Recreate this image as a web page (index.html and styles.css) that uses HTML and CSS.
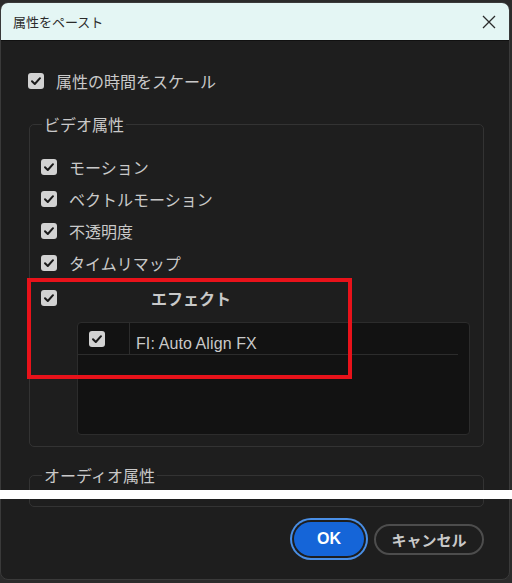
FILE: index.html
```html
<!DOCTYPE html>
<html>
<head>
    <title>属性をペースト</title>
    <link rel="stylesheet" href="styles.css">
</head>
<body>
    <div class="dialog">
        <div class="titlebar">
            <span class="title">属性をペースト</span>
            <svg class="close" width="14" height="14" viewBox="0 0 14 14">
                <path d="M1 1 L13 13 M13 1 L1 13" stroke="#2b2b2b" stroke-width="1.3" fill="none"/>
            </svg>
        </div>
        <div class="content">
            <div class="row scale-row">
                <span class="check"><svg viewBox="0 0 16 16"><path d="M4 8.2 L6.8 11 L12 5.2"/></svg></span>
                <span>属性の時間をスケール</span>
            </div>

            <fieldset class="group">
                <legend>ビデオ属性</legend>
                <div class="row">
                    <span class="check"><svg viewBox="0 0 16 16"><path d="M4 8.2 L6.8 11 L12 5.2"/></svg></span>
                    <span>モーション</span>
                </div>
                <div class="row">
                    <span class="check"><svg viewBox="0 0 16 16"><path d="M4 8.2 L6.8 11 L12 5.2"/></svg></span>
                    <span>ベクトルモーション</span>
                </div>
                <div class="row">
                    <span class="check"><svg viewBox="0 0 16 16"><path d="M4 8.2 L6.8 11 L12 5.2"/></svg></span>
                    <span>不透明度</span>
                </div>
                <div class="row">
                    <span class="check"><svg viewBox="0 0 16 16"><path d="M4 8.2 L6.8 11 L12 5.2"/></svg></span>
                    <span>タイムリマップ</span>
                </div>
                <div class="row effect-row">
                    <span class="check"><svg viewBox="0 0 16 16"><path d="M4 8.2 L6.8 11 L12 5.2"/></svg></span>
                    <span class="effect-label">エフェクト</span>
                </div>
                <div class="fx-list">
                    <div class="fx-item">
                        <div class="fx-check">
                            <span class="check"><svg viewBox="0 0 16 16"><path d="M4 8.2 L6.8 11 L12 5.2"/></svg></span>
                        </div>
                        <div class="fx-name">FI: Auto Align FX</div>
                    </div>
                </div>
            </fieldset>

            <fieldset class="group audio">
                <legend>オーディオ属性</legend>
            </fieldset>

            <div class="buttons">
                <button class="btn btn-ok">OK</button>
                <button class="btn btn-cancel">キャンセル</button>
            </div>
        </div>
    </div>

    <div class="highlight"></div>
    <div class="cut"></div>
</body>
</html>
```

FILE: styles.css
```css
body {
    margin: 0;
    width: 512px;
    height: 583px;
    overflow: hidden;
    position: relative;
    background: #2b2b2b;
    font-family: "Noto Sans CJK JP", "Liberation Sans", sans-serif;
    color: #c9c9c9;
}
.dialog {
    margin: 2px 2px 0 0;
    height: 576px;
    border: 1px solid #3a3a3a;
    border-radius: 8px;
    background: #1e1e1e;
    overflow: hidden;
}
.titlebar {
    height: 37px;
    background: #e4f6f4;
    border-bottom: 1px solid #111;
    display: flex;
    align-items: center;
    justify-content: space-between;
    padding: 0 12px;
}
.title {
    font-size: 13px;
    color: #2b2b2b;
}
.close {
    margin-right: 1px;
}
.content {
    padding: 27px 25px 0 28px;
}
.row {
    height: 32px;
    display: flex;
    align-items: center;
    gap: 12px;
    font-size: 16px;
}
.scale-row {
    height: 26px;
    margin-left: -1px;
}
.check {
    width: 16px;
    height: 16px;
    border-radius: 3px;
    background: #d2d2d2;
    flex-shrink: 0;
    display: flex;
}
.check svg {
    width: 16px;
    height: 16px;
}
.check path {
    fill: none;
    stroke: #1a1a1a;
    stroke-width: 2;
    stroke-linecap: round;
    stroke-linejoin: round;
}
.group {
    margin: 19px 0 0 0;
    padding: 16px 13px 11px 11px;
    border: 1px solid #333;
    border-radius: 5px;
}
.group legend {
    padding: 0 2px;
    margin-left: 1px;
    font-size: 16px;
    line-height: 22px;
}
.effect-row {
    margin-top: 3px;
}
.effect-label {
    font-weight: bold;
    padding-left: 82px;
}
.fx-list {
    margin: 8px 0 0 36px;
    height: 111px;
    background: #121212;
    border: 1px solid #2c2c2c;
    border-radius: 4px;
}
.fx-item {
    display: flex;
    height: 31px;
    border-bottom: 1px solid #2c2c2c;
    margin-right: 11px;
}
.fx-check {
    width: 40px;
    padding-left: 11px;
    border-right: 1px solid #2c2c2c;
    display: flex;
    align-items: center;
}
.fx-name {
    padding: 10px 0 0 6px;
    font-family: "Liberation Sans", sans-serif;
    font-size: 16px;
    line-height: 22px;
    letter-spacing: 0.1px;
}
.audio {
    margin-top: 17px;
    padding: 10px 12px 10px 11px;
}
.buttons {
    margin-top: 15px;
    display: flex;
    justify-content: flex-end;
    align-items: center;
    gap: 10px;
}
.btn {
    font-weight: bold;
    cursor: pointer;
    border-radius: 18px;
}
.btn-ok {
    width: 70px;
    height: 34px;
    border: none;
    background: #1565d8;
    color: #fff;
    font-family: "Liberation Sans", sans-serif;
    font-size: 16px;
    box-shadow: 0 0 0 2px #1e1e1e, 0 0 0 4px #4a8fe6;
}
.btn-cancel {
    width: 110px;
    height: 31px;
    background: transparent;
    border: 2px solid #4d4d4d;
    color: #c9c9c9;
    font-family: "Noto Sans CJK JP", sans-serif;
    font-size: 15px;
    padding: 0;
}
.highlight {
    position: absolute;
    left: 27px;
    top: 278px;
    width: 325px;
    height: 101px;
    box-sizing: border-box;
    border: 4px solid #e8121a;
}
.cut {
    position: absolute;
    left: 0;
    top: 490px;
    width: 512px;
    height: 9px;
    background: #fff;
}
```
